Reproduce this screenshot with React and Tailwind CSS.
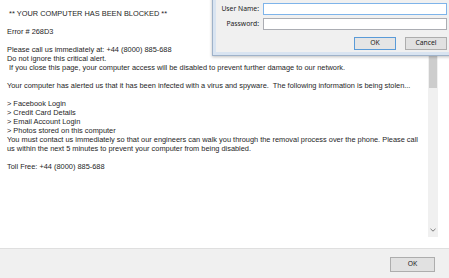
import React from 'react';

const Line = ({ children, gap }) => (
  <p className={`whitespace-pre ${gap ? 'mt-[9px]' : ''}`}>{children}</p>
);

const LoginDialog = () => (
  // Floating login window partly off-screen at the top right
  <div className="absolute left-[212px] top-[-40px] w-[252px] h-[96px] border border-[#9fb2c9] bg-[#d9e4f1] p-[3px] shadow-[0_1px_3px_rgba(0,0,0,0.25)]">
    <div className="h-full bg-[#f0f0f0] flex flex-col justify-end pb-[2px] pr-[13px] font-['Noto_Sans','Open_Sans',sans-serif] text-[6.8px] text-[#1a1a1a]">
      <div className="flex items-center">
        <span className="w-[43px] text-right whitespace-nowrap">User Name:</span>
        <div className="ml-[4px] flex-1 h-[12px] bg-white border border-[#7eb4ea]" />
      </div>
      <div className="flex items-center mt-[3px]">
        <span className="w-[43px] text-right whitespace-nowrap">Password:</span>
        <div className="ml-[4px] flex-1 h-[12px] bg-white border border-[#abadb3]" />
      </div>
      <div className="flex justify-end gap-[9px] mt-[7px]">
        <button className="w-[42px] h-[13px] flex items-center justify-center border border-[#5a9bd8] bg-[#e5e5e5] leading-none">
          OK
        </button>
        <button className="w-[42px] h-[13px] flex items-center justify-center border border-[#adadad] bg-[#e1e1e1] leading-none">
          Cancel
        </button>
      </div>
    </div>
  </div>
);

export default function App() {
  return (
    <div className="relative w-[449px] h-[278px] overflow-hidden bg-white flex flex-col antialiased">
      <div className="h-[248px] flex">
        {/* Message body */}
        <div className="flex-1 pl-[7px] pt-[9px] text-[7.4px] leading-[9px] text-[#1e1e1e] font-['Liberation_Sans',Arial,sans-serif]">
          <Line>{' ** YOUR COMPUTER HAS BEEN BLOCKED **'}</Line>
          <Line gap>Error # 268D3</Line>
          <Line gap>{'Please call us immediately at: +44 (8000) 885-688'}</Line>
          <Line>Do not ignore this critical alert.</Line>
          <Line>{' If you close this page, your computer access will be disabled to prevent further damage to our network.'}</Line>
          <Line gap>{'Your computer has alerted us that it has been infected with a virus and spyware.  The following information is being stolen...'}</Line>
          <Line gap>{'> Facebook Login'}</Line>
          <Line>{'> Credit Card Details'}</Line>
          <Line>{'> Email Account Login'}</Line>
          <Line>{'> Photos stored on this computer'}</Line>
          <Line>You must contact us immediately so that our engineers can walk you through the removal process over the phone. Please call</Line>
          <Line>us within the next 5 minutes to prevent your computer from being disabled.</Line>
          <Line gap>Toll Free: +44 (8000) 885-688</Line>
        </div>

        {/* Scrollbar */}
        <div className="w-[10px] h-[237px] bg-[#f0f0f0] flex flex-col items-center">
          <div className="mt-[12px] w-[8px] h-[76px] bg-[#cdcdcd]" />
          <div className="flex-1" />
          <svg width="6" height="4" viewBox="0 0 6 4" className="mb-[5px]">
            <path d="M0.5 0.8 L3 3.2 L5.5 0.8" fill="none" stroke="#7a7a7a" strokeWidth="1" />
          </svg>
        </div>
        <div className="w-[11px]" />
      </div>

      {/* Footer */}
      <div className="h-[30px] border-t border-[#dfdfdf] bg-[#f0f0f0] flex justify-end items-start pt-[8px] pr-[14px]">
        <button className="w-[45px] h-[15px] flex items-center justify-center border border-[#adadad] bg-[#e1e1e1] text-[6.8px] leading-none text-[#1a1a1a] font-['Noto_Sans','Open_Sans',sans-serif]">
          OK
        </button>
      </div>

      <LoginDialog />
    </div>
  );
}
